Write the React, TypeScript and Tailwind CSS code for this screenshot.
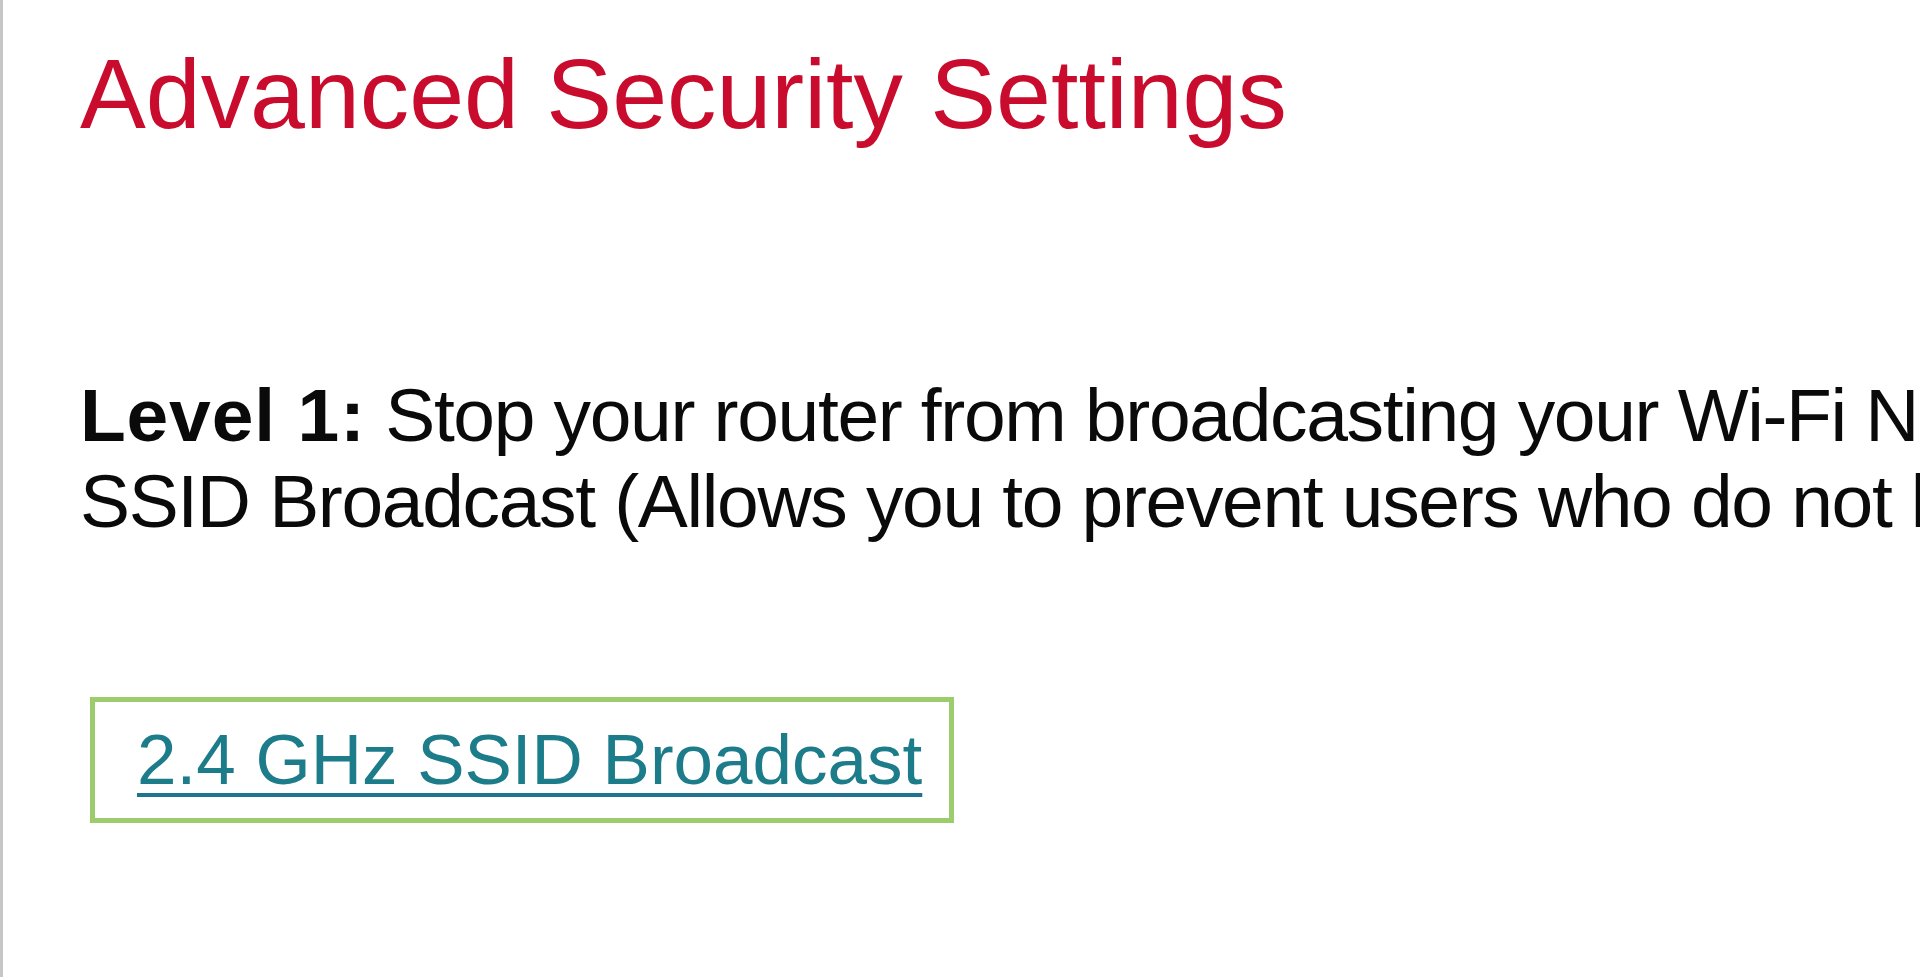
import React from 'react'

const App = () => {
  return (
    <div className="min-h-screen w-full overflow-hidden bg-white border-l-[3px] border-[#c6c6c6] font-['Liberation_Sans',Arial,sans-serif]">
      <div className="pl-[77px] pt-[38px]">
        <h1 className="text-[98.7px] leading-[113px] font-normal text-[#c90c2d] whitespace-nowrap">
          Advanced Security Settings
        </h1>

        {/* level 1 description, runs past the right edge */}
        <div className="mt-[221px] text-[75px] leading-[86px] tracking-[-1.35px] text-[#0a0a0a] whitespace-nowrap">
          <p>
            <span className="font-bold tracking-[0.8px]">Level 1:</span> Stop your router from broadcasting your Wi-Fi Network Name
          </p>
          <p>SSID Broadcast (Allows you to prevent users who do not know your network name)</p>
        </div>

        <div className="mt-[153px] ml-[10px] inline-block border-[5px] border-[#9ccc6e] pl-[42px] pr-[27px] pt-[17px] pb-[17px]">
          <a
            href="#"
            className="block text-[71px] leading-[82px] text-[#1c7c8a] underline decoration-[4px] decoration-[#1f7390] underline-offset-[9px] whitespace-nowrap"
          >
            2.4 GHz SSID Broadcast
          </a>
        </div>
      </div>
    </div>
  )
}

export default App
